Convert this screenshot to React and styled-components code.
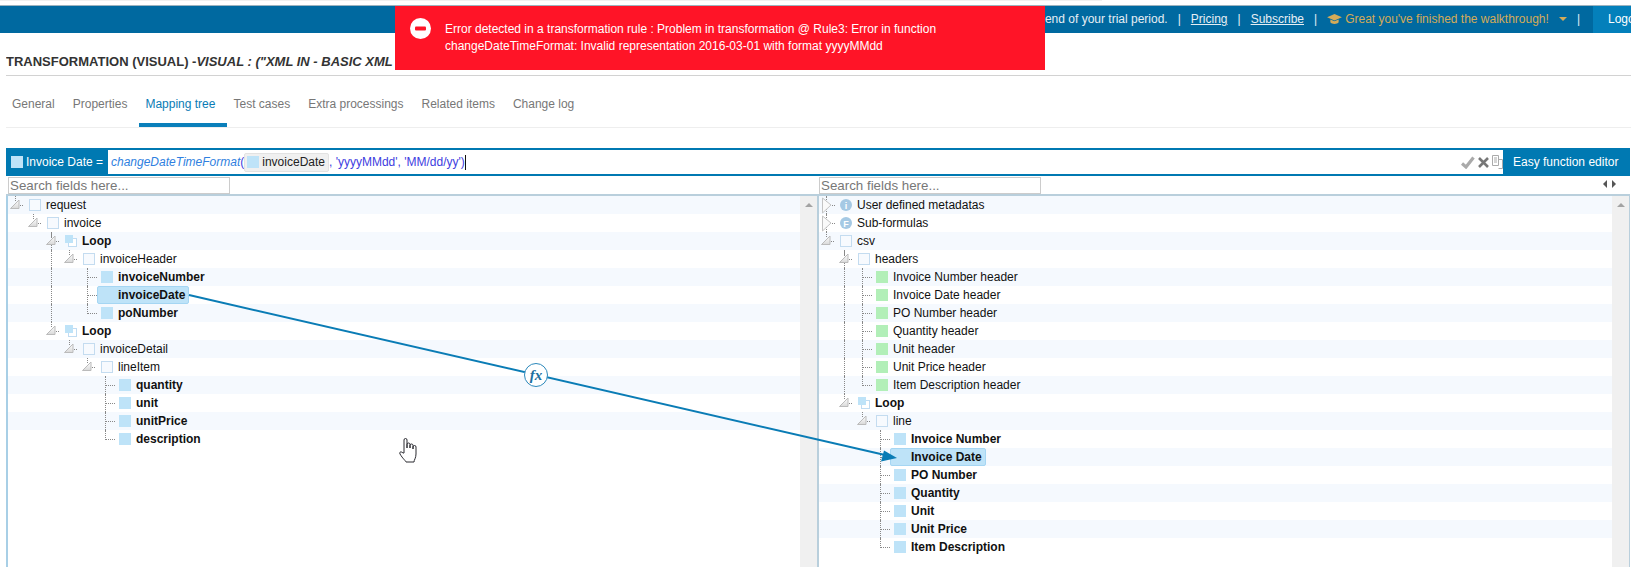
import React from "react";
import styled, { createGlobalStyle } from "styled-components";

const GlobalStyle = createGlobalStyle`
  html, body {
    margin: 0;
    padding: 0;
    background: #fff;
    overflow: hidden;
  }
  body {
    font-family: "Liberation Sans", Arial, sans-serif;
    font-size: 12px;
    color: #222;
  }
`;

const leftRows = [
  { label: "request", level: 0, kind: "box", open: true },
  { label: "invoice", level: 1, kind: "box", open: true },
  { label: "Loop", level: 2, kind: "loop", open: true, bold: true },
  { label: "invoiceHeader", level: 3, kind: "box", open: true },
  { label: "invoiceNumber", level: 4, kind: "leaf", bold: true },
  { label: "invoiceDate", level: 4, kind: "leaf", bold: true, selected: true },
  { label: "poNumber", level: 4, kind: "leaf", bold: true },
  { label: "Loop", level: 2, kind: "loop", open: true, bold: true },
  { label: "invoiceDetail", level: 3, kind: "box", open: true },
  { label: "lineItem", level: 4, kind: "box", open: true },
  { label: "quantity", level: 5, kind: "leaf", bold: true },
  { label: "unit", level: 5, kind: "leaf", bold: true },
  { label: "unitPrice", level: 5, kind: "leaf", bold: true },
  { label: "description", level: 5, kind: "leaf", bold: true },
];

const rightRows = [
  { label: "User defined metadatas", level: 0, kind: "info", closed: true },
  { label: "Sub-formulas", level: 0, kind: "formula", closed: true },
  { label: "csv", level: 0, kind: "box", open: true },
  { label: "headers", level: 1, kind: "box", open: true },
  { label: "Invoice Number header", level: 2, kind: "green" },
  { label: "Invoice Date header", level: 2, kind: "green" },
  { label: "PO Number header", level: 2, kind: "green" },
  { label: "Quantity header", level: 2, kind: "green" },
  { label: "Unit header", level: 2, kind: "green" },
  { label: "Unit Price header", level: 2, kind: "green" },
  { label: "Item Description header", level: 2, kind: "green" },
  { label: "Loop", level: 1, kind: "loop", open: true, bold: true },
  { label: "line", level: 2, kind: "box", open: true },
  { label: "Invoice Number", level: 3, kind: "leaf", bold: true },
  { label: "Invoice Date", level: 3, kind: "leaf", bold: true, selected: true },
  { label: "PO Number", level: 3, kind: "leaf", bold: true },
  { label: "Quantity", level: 3, kind: "leaf", bold: true },
  { label: "Unit", level: 3, kind: "leaf", bold: true },
  { label: "Unit Price", level: 3, kind: "leaf", bold: true },
  { label: "Item Description", level: 3, kind: "leaf", bold: true },
];

// a vertical guide runs from a row down to the next row on the same level
const guidesFor = (rows, index) => {
  const guides = [];
  const level = rows[index].level;
  for (let l = 0; l <= level; l++) {
    for (let j = index + 1; j < rows.length; j++) {
      if (rows[j].level < l) break;
      if (rows[j].level === l) {
        guides.push(l);
        break;
      }
    }
  }
  return guides;
};

const Page = styled.div`
  position: relative;
  width: 1631px;
  height: 567px;
  overflow: hidden;
  background: #fff;
`;

const TopRule = styled.div`
  height: 1px;
  width: 1102px;
  background: #f0f0f0;
  margin-bottom: 4px;
`;

const Header = styled.header`
  height: 28px;
  box-sizing: border-box;
  border-top: 1px solid #9db3bf;
  padding-bottom: 1px;
  background: #0069a0;
  display: flex;
  justify-content: flex-end;
  align-items: center;
  color: #e6eef4;
  font-size: 12px;
  white-space: nowrap;
`;

const Sep = styled.span`
  margin: 0 10px;
  color: #e6eef4;
`;

const HeaderLink = styled.a`
  color: #e6eef4;
  text-decoration: underline;
`;

const Walkthrough = styled.span`
  display: inline-flex;
  align-items: center;
  gap: 3px;
  color: #d4ab58;
`;

const Caret = styled.span`
  width: 0;
  height: 0;
  margin-left: 7px;
  border-left: 4px solid transparent;
  border-right: 4px solid transparent;
  border-top: 4px solid #d4ab58;
`;

const Logout = styled.div`
  width: 38px;
  height: 27px;
  margin: -1px 0 -1px 3px;
  padding-left: 15px;
  box-sizing: border-box;
  background: #0480bb;
  color: #fff;
  line-height: 26px;
  overflow: hidden;
`;

const ErrorToast = styled.div`
  position: absolute;
  left: 395px;
  top: 6px;
  width: 650px;
  height: 64px;
  box-sizing: border-box;
  padding: 15px 0 0 50px;
  background: #ff1427;
  color: #fff;
  font-size: 12px;
  line-height: 17px;
  svg {
    position: absolute;
    left: 15px;
    top: 12px;
  }
`;

const TitleBar = styled.div`
  height: 21px;
  margin-left: 6px;
  padding-top: 21px;
  border-bottom: 1px solid #d2d2d2;
  font-size: 13px;
  line-height: 16px;
  font-weight: bold;
  color: #333;
  white-space: nowrap;
  overflow: hidden;
`;

const TitleItalic = styled.em`
  font-style: italic;
`;

const Tabs = styled.nav`
  display: flex;
  height: 52px;
  margin-left: 6px;
  border-bottom: 1px solid #eee;
  box-sizing: border-box;
`;

const Tab = styled.a`
  display: block;
  height: 51px;
  box-sizing: border-box;
  padding: 21px 12px 0 6px;
  font-size: 12px;
  line-height: 14px;
  color: ${(p) => (p.$active ? "#0a7cb5" : "#777")};
  border-bottom: 4px solid ${(p) => (p.$active ? "#0a7fba" : "transparent")};
`;

const Editor = styled.section`
  margin: 20px 1px 0 6px;
`;

const FormulaBar = styled.div`
  display: flex;
  height: 28px;
  box-sizing: border-box;
  background: #0079b2;
  color: #fff;
`;

const FormulaLabel = styled.div`
  display: flex;
  align-items: center;
  gap: 3px;
  width: 102px;
  padding-left: 5px;
  box-sizing: border-box;
  font-size: 12px;
  white-space: nowrap;
`;

const LabelSquare = styled.span`
  width: 12px;
  height: 12px;
  background: #bee3f8;
`;

const FormulaInput = styled.div`
  flex: 1;
  display: flex;
  align-items: center;
  margin: 2px 0;
  padding-left: 3px;
  background: #fff;
  color: #4040e0;
  font-size: 12px;
  white-space: pre;
`;

const FuncName = styled.em`
  color: #2f7fe0;
`;

const FieldChip = styled.span`
  display: inline-flex;
  align-items: center;
  gap: 3px;
  height: 17px;
  padding: 0 3px 0 2px;
  background: #f0f0f0;
  border: 1px solid #e2e2e2;
  border-radius: 2px;
  color: #222;
`;

const ChipSquare = styled.span`
  width: 12px;
  height: 12px;
  background: #bee3f8;
`;

const Caretbar = styled.span`
  width: 1px;
  height: 15px;
  background: #111;
`;

const FormulaTools = styled.div`
  margin-left: auto;
  display: flex;
  align-items: center;
  gap: 3px;
  width: 42px;
  height: 100%;
  overflow: hidden;
  flex: none;
`;

const EasyButton = styled.div`
  width: 127px;
  padding-left: 10px;
  box-sizing: border-box;
  line-height: 28px;
  font-size: 12px;
  white-space: nowrap;
`;

const SearchRow = styled.div`
  display: grid;
  grid-template-columns: 811px 1fr;
  height: 20px;
  box-sizing: border-box;
  border-bottom: 2px solid #b9cfdc;
`;

const SearchCell = styled.div`
  position: relative;
  padding: 1px 0 0 2px;
`;

const SearchInput = styled.input`
  display: block;
  width: 222px;
  height: 17px;
  padding: 0 1px;
  box-sizing: border-box;
  border: 1px solid #ccc;
  font-family: "Liberation Sans", Arial, sans-serif;
  font-size: 13.33px;
  outline: none;
  &::placeholder {
    color: #777;
    opacity: 1;
  }
`;

const SplitHandle = styled.div`
  position: absolute;
  right: 14px;
  top: 4px;
  display: flex;
`;

const Panes = styled.div`
  display: grid;
  grid-template-columns: 811px 1fr;
  height: 372px;
  border-right: 1px solid #b9cfdc;
  overflow: hidden;
`;

const Pane = styled.div`
  display: flex;
  min-width: 0;
  border-left: 2px solid ${(p) => (p.$first ? "#a8cfe6" : "#b9cfdc")};
`;

const Tree = styled.div`
  flex: 1;
  min-width: 0;
`;

const Gutter = styled.div`
  width: 17px;
  flex: none;
  background: #f0f0f0;
  display: flex;
  justify-content: center;
  padding-top: 7px;
  box-sizing: border-box;
`;

const GutterArrow = styled.span`
  width: 0;
  height: 0;
  border-left: 4px solid transparent;
  border-right: 4px solid transparent;
  border-bottom: 4px solid #a3a3a3;
`;

const Row = styled.div`
  position: relative;
  display: flex;
  align-items: center;
  height: 18px;
  padding-left: ${(p) => p.$level * 18}px;
  background: ${(p) => (p.$odd ? "#f5f9fe" : "#fff")};
`;

const Toggle = styled.span`
  position: relative;
  display: flex;
  width: 15px;
  height: 18px;
  margin-left: 2px;
  margin-right: 4px;
  flex: none;
`;

const Stub = styled.span`
  position: relative;
  width: 21px;
  height: 18px;
  flex: none;
  &::before {
    content: "";
    position: absolute;
    left: 8px;
    right: 4px;
    top: 9px;
    border-top: 1px dotted #888;
  }
`;

const Guide = styled.span`
  position: absolute;
  left: ${(p) => p.$level * 18 + 7}px;
  top: 0;
  height: ${(p) => (p.$end ? "10px" : "18px")};
  border-left: 1px dotted #888;
`;

const Label = styled.span`
  position: relative;
  margin-left: 5px;
  color: #111;
  font-weight: ${(p) => (p.$bold ? "bold" : "normal")};
  white-space: nowrap;
`;

const Square = styled.span`
  position: relative;
  width: 12px;
  height: 12px;
  flex: none;
  box-sizing: border-box;
  background: ${(p) => p.$fill};
  border: ${(p) => (p.$line ? "1px solid #c4dcf0" : "none")};
`;

const Selection = styled.span`
  position: absolute;
  top: 0;
  left: ${(p) => p.$left}px;
  width: ${(p) => p.$width}px;
  height: 18px;
  box-sizing: border-box;
  background: #bee3f8;
  border: 1px solid #a5d6f3;
  border-radius: 2px;
`;

const Overlay = styled.svg`
  position: absolute;
  left: 0;
  top: 0;
  pointer-events: none;
`;

const OpenToggle = () => (
  <svg width="15" height="18" viewBox="0 0 15 18">
    <defs>
      <linearGradient id="tri" x1="0" y1="0" x2="0" y2="1">
        <stop offset="0" stopColor="#fff" />
        <stop offset="1" stopColor="#d8d8d8" />
      </linearGradient>
    </defs>
    <path d="M0.5 12.5 L9 4 V12.5 Z" fill="url(#tri)" stroke="#bbb" />
    <path d="M5.5 0 v5" stroke="#888" strokeDasharray="1 1" />
    <path d="M10 9.5 h4" stroke="#888" strokeDasharray="1 1" />
  </svg>
);

const ClosedToggle = () => (
  <svg width="15" height="18" viewBox="0 0 15 18">
    <path d="M1.5 2 L10 9 L1.5 17 Z" fill="#fafafa" stroke="#c4c4c4" />
    <path d="M11 9.5 h3" stroke="#888" strokeDasharray="1 1" />
  </svg>
);

const LoopIcon = () => (
  <svg width="12" height="12" viewBox="0 0 12 12" style={{ flex: "none" }}>
    <rect x="3.5" y="3.5" width="8" height="8" fill="#fff" stroke="#c0dcf2" />
    <rect x="0" y="0" width="8" height="8" fill="#bee3f8" />
  </svg>
);

const RoundIcon = ({ letter }) => (
  <svg width="12" height="12" viewBox="0 0 12 12" style={{ flex: "none" }}>
    <circle cx="6" cy="6" r="6" fill="#a5c9e4" />
    <text x="6" y="9.5" textAnchor="middle" fontSize="9" fontWeight="bold" fill="#fff" fontFamily="Liberation Sans">
      {letter}
    </text>
  </svg>
);

const NodeIcon = ({ kind }) => {
  if (kind === "loop") return <LoopIcon />;
  if (kind === "info") return <RoundIcon letter="i" />;
  if (kind === "formula") return <RoundIcon letter="F" />;
  if (kind === "green") return <Square $fill="#b2efb8" />;
  if (kind === "leaf") return <Square $fill="#bee3f8" />;
  return <Square $fill="#f7fafe" $line />;
};

const TreeRows = ({ rows, selectionLeft, selectionWidth }) =>
  rows.map((row, i) => {
    const guides = guidesFor(rows, i);
    const isLeaf = !row.open && !row.closed;
    return (
      <Row key={i} $level={row.level} $odd={i % 2 === 0}>
        {guides.map((l) => (
          <Guide key={l} $level={l} />
        ))}
        {isLeaf && !guides.includes(row.level) && <Guide $level={row.level} $end />}
        {row.selected && <Selection $left={selectionLeft} $width={selectionWidth} />}
        {row.open && (
          <Toggle>
            <OpenToggle />
          </Toggle>
        )}
        {row.closed && (
          <Toggle>
            <ClosedToggle />
          </Toggle>
        )}
        {isLeaf && <Stub />}
        <NodeIcon kind={row.kind} />
        <Label $bold={row.bold}>{row.label}</Label>
      </Row>
    );
  });

const tabs = ["General", "Properties", "Mapping tree", "Test cases", "Extra processings", "Related items", "Change log"];

const App = () => (
  <Page>
    <GlobalStyle />
    <TopRule />
    <Header>
      <span>end of your trial period.</span>
      <Sep>|</Sep>
      <HeaderLink>Pricing</HeaderLink>
      <Sep>|</Sep>
      <HeaderLink>Subscribe</HeaderLink>
      <Sep>|</Sep>
      <Walkthrough>
        <svg width="15" height="12" viewBox="0 0 16 13">
          <path d="M8 1 L16 4.5 L8 8 L0 4.5 Z" fill="#d4ab58" />
          <path d="M3.5 7 V10 C5 12.5 11 12.5 12.5 10 V7 L8 9 Z" fill="#d4ab58" />
        </svg>
        Great you've finished the walkthrough!
        <Caret />
      </Walkthrough>
      <Sep>|</Sep>
      <Logout>Logout</Logout>
    </Header>
    <ErrorToast>
      <svg width="21" height="21" viewBox="0 0 21 21">
        <circle cx="10.5" cy="10.5" r="10.5" fill="#fff" />
        <rect x="5" y="8.5" width="11" height="4" rx="1" fill="#ff1427" />
      </svg>
      Error detected in a transformation rule : Problem in transformation @ Rule3: Error in function
      <br />
      changeDateTimeFormat: Invalid representation 2016-03-01 with format yyyyMMdd
    </ErrorToast>
    <TitleBar>
      TRANSFORMATION (VISUAL) -<TitleItalic>VISUAL : ("XML IN - BASIC XML</TitleItalic>
    </TitleBar>
    <Tabs>
      {tabs.map((t) => (
        <Tab key={t} $active={t === "Mapping tree"}>
          {t}
        </Tab>
      ))}
    </Tabs>
    <Editor>
      <FormulaBar>
        <FormulaLabel>
          <LabelSquare />
          Invoice Date =
        </FormulaLabel>
        <FormulaInput>
          <FuncName>changeDateTimeFormat</FuncName>(
          <FieldChip>
            <ChipSquare />
            invoiceDate
          </FieldChip>
          , 'yyyyMMdd', 'MM/dd/yy')
          <Caretbar />
          <FormulaTools>
            <svg width="14" height="13" viewBox="0 0 14 13">
              <path d="M1 7.5 L5 11 L12.5 1.5" fill="none" stroke="#aaa" strokeWidth="3.2" />
            </svg>
            <svg width="11" height="11" viewBox="0 0 11 11">
              <path d="M1 1 L10 10 M10 1 L1 10" stroke="#777" strokeWidth="2.6" />
            </svg>
            <svg width="11" height="14" viewBox="0 0 11 14" style={{ flex: "none" }}>
              <path d="M0.5 0.5 h6 v10 h-6 Z M6.5 4.5 h4 v9 h-4 M2 3 h3 M2 5 h3 M2 7 h3" fill="none" stroke="#aaa" />
            </svg>
          </FormulaTools>
        </FormulaInput>
        <EasyButton>Easy function editor</EasyButton>
      </FormulaBar>
      <SearchRow>
        <SearchCell>
          <SearchInput placeholder="Search fields here..." />
        </SearchCell>
        <SearchCell>
          <SearchInput placeholder="Search fields here..." />
          <SplitHandle>
            <svg width="13" height="8" viewBox="0 0 13 8">
              <path d="M4 0 V8 L0 4 Z M9 0 V8 L13 4 Z" fill="#555" />
            </svg>
          </SplitHandle>
        </SearchCell>
      </SearchRow>
      <Panes>
        <Pane $first>
          <Tree>
            <TreeRows rows={leftRows} selectionLeft={89} selectionWidth={92} />
          </Tree>
          <Gutter>
            <GutterArrow />
          </Gutter>
        </Pane>
        <Pane>
          <Tree>
            <TreeRows rows={rightRows} selectionLeft={71} selectionWidth={96} />
          </Tree>
          <Gutter>
            <GutterArrow />
          </Gutter>
        </Pane>
      </Panes>
    </Editor>
    <Overlay width="1631" height="567" viewBox="0 0 1631 567">
      <line x1="189" y1="295" x2="885" y2="455" stroke="#0a7cb5" strokeWidth="2" />
      <path d="M897 458 L881 461.5 L884 450.5 Z" fill="#0a7cb5" />
      <circle cx="536" cy="375" r="11.5" fill="#fff" stroke="#2b88bb" strokeWidth="1" />
      <text x="536" y="380" textAnchor="middle" fontFamily="Liberation Serif" fontStyle="italic" fontWeight="bold" fontSize="15" fill="#1c6f9e">
        fx
      </text>
      <path
        d="M404 453 V440 a1.5 1.5 0 0 1 3 0 V448 V444.5 a1.5 1.5 0 0 1 3 0 V448 V445.5 a1.5 1.5 0 0 1 3 0 V449 V447 a1.5 1.5 0 0 1 3 0 V454 c0 4 -2 6 -2 8 h-8 c-1 -2 -3 -3 -6 -8 c-1 -2 1 -3 3 -1 Z"
        fill="#fff"
        stroke="#2a2a30"
        strokeWidth="1"
      />
    </Overlay>
  </Page>
);

export default App;
